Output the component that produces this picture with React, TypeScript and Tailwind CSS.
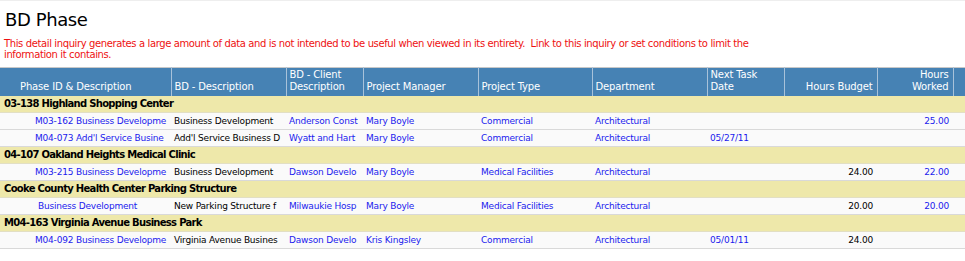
import React from "react";

const B = "text-[#1a1aee]";
const K = "text-black";

type Cell = { t: string; c?: string; r?: boolean };
type Row = { group?: string; cells?: Cell[]; indent?: number };

const rows: Row[] = [
  { group: "03-138 Highland Shopping Center" },
  {
    indent: 35,
    cells: [
      { t: "M03-162 Business Developme", c: B },
      { t: "Business Development", c: K },
      { t: "Anderson Const", c: B },
      { t: "Mary Boyle", c: B },
      { t: "Commercial", c: B },
      { t: "Architectural", c: B },
      { t: "", c: B },
      { t: "", c: K, r: true },
      { t: "25.00", c: B, r: true },
    ],
  },
  {
    indent: 35,
    cells: [
      { t: "M04-073 Add'l Service Busine", c: B },
      { t: "Add'l Service Business D", c: K },
      { t: "Wyatt and Hart", c: B },
      { t: "Mary Boyle", c: B },
      { t: "Commercial", c: B },
      { t: "Architectural", c: B },
      { t: "05/27/11", c: B },
      { t: "", c: K, r: true },
      { t: "", c: B, r: true },
    ],
  },
  { group: "04-107 Oakland Heights Medical Clinic" },
  {
    indent: 35,
    cells: [
      { t: "M03-215 Business Developme", c: B },
      { t: "Business Development", c: K },
      { t: "Dawson Develo", c: B },
      { t: "Mary Boyle", c: B },
      { t: "Medical Facilities", c: B },
      { t: "Architectural", c: B },
      { t: "", c: B },
      { t: "24.00", c: K, r: true },
      { t: "22.00", c: B, r: true },
    ],
  },
  { group: "Cooke County Health Center Parking Structure" },
  {
    indent: 38,
    cells: [
      { t: "Business Development", c: B },
      { t: "New Parking Structure f", c: K },
      { t: "Milwaukie Hosp", c: B },
      { t: "Mary Boyle", c: B },
      { t: "Medical Facilities", c: B },
      { t: "Architectural", c: B },
      { t: "", c: B },
      { t: "20.00", c: K, r: true },
      { t: "20.00", c: B, r: true },
    ],
  },
  { group: "M04-163 Virginia Avenue Business Park" },
  {
    indent: 35,
    cells: [
      { t: "M04-092 Business Developme", c: B },
      { t: "Virginia Avenue Busines", c: K },
      { t: "Dawson Develo", c: B },
      { t: "Kris Kingsley", c: B },
      { t: "Commercial", c: B },
      { t: "Architectural", c: B },
      { t: "05/01/11", c: B },
      { t: "24.00", c: K, r: true },
      { t: "", c: B, r: true },
    ],
  },
];

const widths = [171, 115, 77, 115, 114, 115, 77, 93, 76, 40];

const th = "font-normal pb-[3px] leading-[12px] tracking-[-0.15px]";

export default function App() {
  return (
    <div
      className="w-[965px] h-[261px] overflow-hidden bg-white border-t border-[#eeeeee]"
      style={{ fontFamily: "'DejaVu Sans', Verdana, sans-serif" }}
    >
      <h1 className="pl-[5px] pt-[7px] text-[18px] leading-[24px] text-black font-normal tracking-[-0.4px]">BD Phase</h1>
      <p className="pl-[4px] pt-[6px] text-[10px] leading-[11px] text-[#ee1111] tracking-[-0.38px]">
        This detail inquiry generates a large amount of data and is not intended to be useful when viewed in its entirety.&nbsp; Link to this inquiry or set conditions to limit the
        <br />
        information it contains.
      </p>
      <table className="mt-[7px] table-fixed border-collapse w-[993px] text-[10px]">
        <colgroup>
          {widths.map((w, i) => (
            <col key={i} style={{ width: w }} />
          ))}
        </colgroup>
        <thead>
          <tr className="h-[28px] bg-[#4682b4] text-white align-bottom border-t border-[#c8c8c8]">
            <th className={`${th} text-left pl-[20px]`}>Phase ID &amp; Description</th>
            <th className={`${th} text-left pl-[3px] border-l border-[#a8c2da]`}>BD - Description</th>
            <th className={`${th} text-left pl-[3px] border-l border-[#a8c2da]`}>
              BD - Client
              <br />
              Description
            </th>
            <th className={`${th} text-left pl-[3px] border-l border-[#a8c2da]`}>Project Manager</th>
            <th className={`${th} text-left pl-[3px] border-l border-[#a8c2da]`}>Project Type</th>
            <th className={`${th} text-left pl-[3px] border-l border-[#a8c2da]`}>Department</th>
            <th className={`${th} text-left pl-[3px] border-l border-[#a8c2da]`}>
              Next Task
              <br />
              Date
            </th>
            <th className={`${th} text-right pr-[4px] border-l border-[#a8c2da]`}>Hours Budget</th>
            <th className={`${th} text-right pr-[4px] border-l border-[#a8c2da]`}>
              Hours
              <br />
              Worked
            </th>
            <th className="border-l border-[#a8c2da]"></th>
          </tr>
        </thead>
        <tbody>
          {rows.map((row, i) =>
            row.group ? (
              <tr key={i} className="h-[17px] bg-[#eee8aa] border-b border-[#e2dfc4]">
                <td colSpan={10} className="pl-[4px] font-bold text-black whitespace-nowrap leading-[16px] tracking-[-0.7px]">
                  {row.group}
                </td>
              </tr>
            ) : (
              <tr key={i} className="h-[17px] bg-[#fafafa] border-b border-[#d9d9d9]">
                {row.cells!.map((c, j) => (
                  <td
                    key={j}
                    className={`${c.c} text-[9px] whitespace-nowrap overflow-hidden leading-[16px] tracking-[-0.2px] ${
                      c.r ? "text-right pr-[4px]" : "text-left pl-[3px]"
                    }`}
                    style={j === 0 ? { paddingLeft: row.indent } : undefined}
                  >
                    {c.t}
                  </td>
                ))}
                <td></td>
              </tr>
            )
          )}
        </tbody>
      </table>
    </div>
  );
}
